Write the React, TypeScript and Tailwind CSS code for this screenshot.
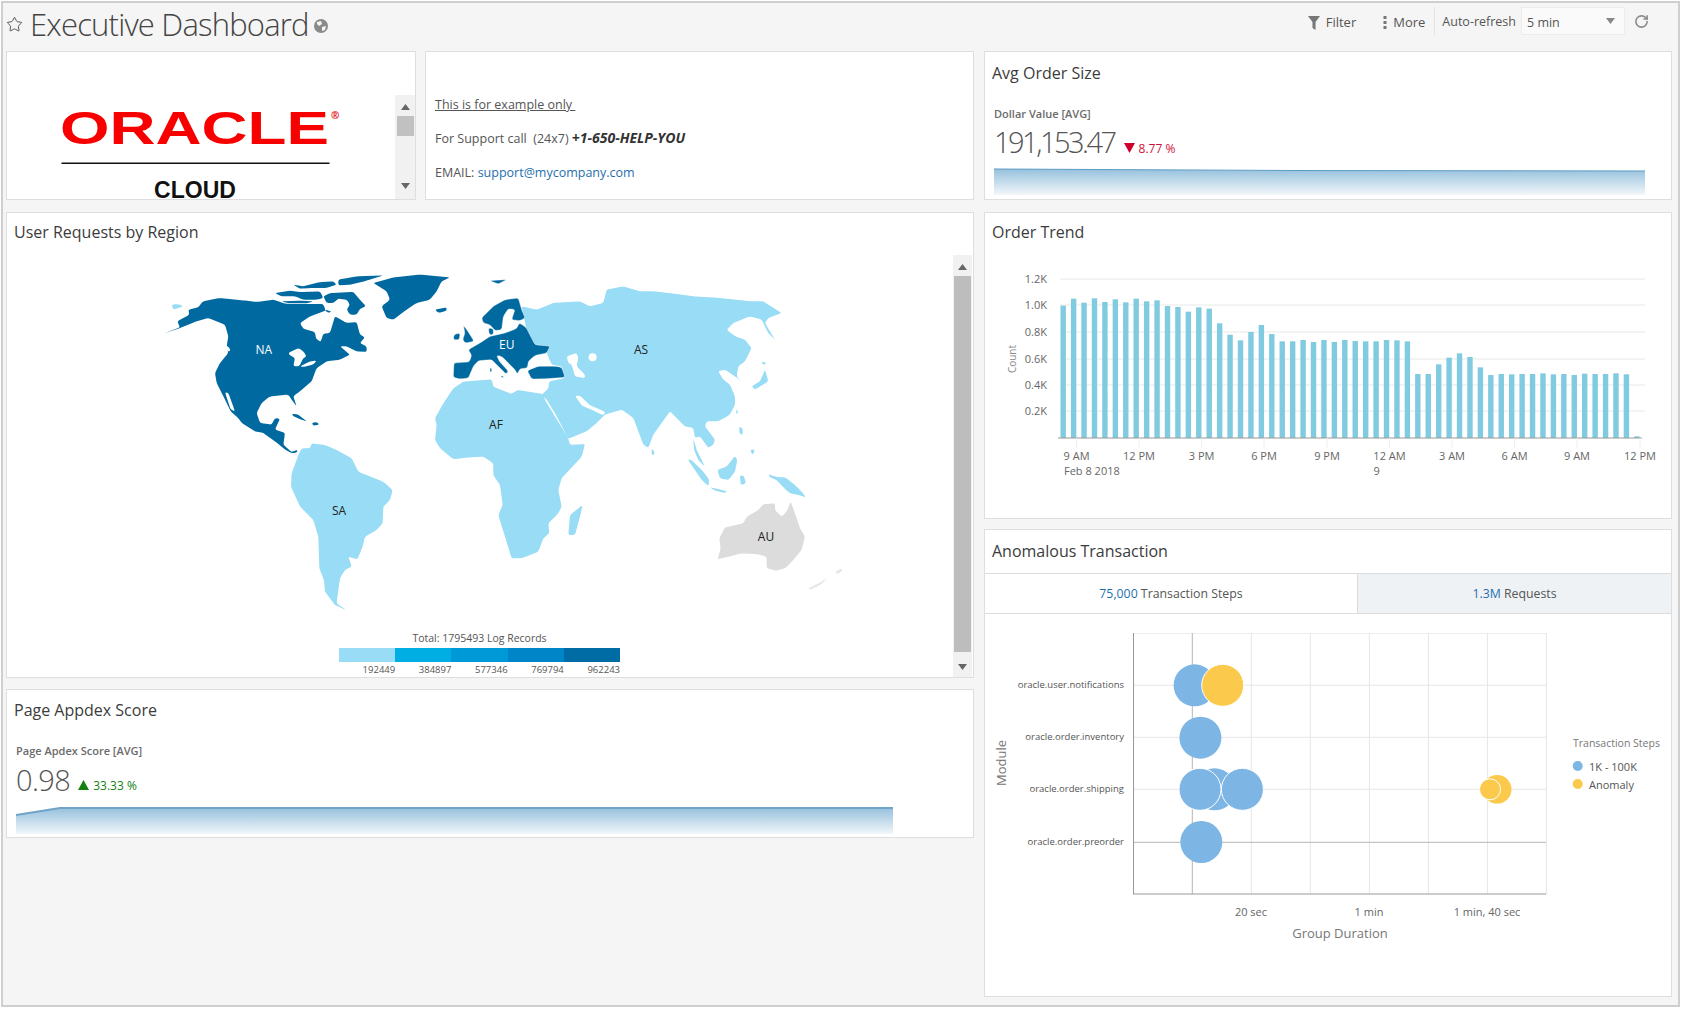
import { RotateCw, Star } from "lucide-react"
import type { ReactNode } from "react"

const NA = {
  main: "8,198 60,178 52,160 88,140 85,125 115,118 128,100 180,90 250,97 290,102 340,95 375,107 440,108 490,108 497,128 450,145 420,165 430,182 465,192 468,212 482,222 490,197 510,195 525,145 560,165 590,162 600,200 615,208 600,225 620,235 620,252 590,250 560,235 540,235 570,260 540,275 500,280 470,300 455,340 420,370 400,385 410,415 395,395 385,380 330,385 305,405 290,435 300,465 335,470 345,450 360,452 345,485 375,495 370,530 395,552 412,545 412,553 395,556 375,545 345,520 310,495 285,490 245,465 235,450 212,430 190,385 170,345 165,315 180,285 205,255 200,235 205,205 195,170 145,150 110,160 60,180",
  islands: [
    "490,85 510,75 580,72 600,95 618,115 600,122 590,140 570,140 560,125 570,110 560,95 535,92 520,105 500,105",
    "345,75 390,68 420,72 480,70 490,90 470,95 430,95 405,85 365,85",
    "400,50 430,55 480,42 520,40 530,50 500,60 450,60 420,62",
    "535,35 590,25 670,22 620,38 570,50 535,52",
    "365,100 420,98 460,100 440,106 380,105",
    "640,45 700,28 780,20 870,28 845,40 830,70 810,95 770,105 740,125 700,155 680,150 665,115 690,95 680,70",
    "825,125 860,118 860,128 835,135",
    "395,437 415,440 440,460 425,455 400,445",
    "455,465 470,462 478,470 460,473",
    "493,125 515,130 505,135",
  ],
  holes: [
    "195,372 205,375 225,430 212,425",
    "385,255 415,240 430,250 440,265 430,270 418,295 400,295 405,270 390,262",
    "420,295 450,280 470,278 460,290 430,297",
    "195,230 210,240 210,252 198,245",
  ],
}

const EU = [
  "125,150 160,115 195,95 235,90 245,125 255,150 240,158 215,155 225,125 205,122 190,145 185,185 165,188 150,170 130,165",
  "85,245 120,225 150,205 195,195 230,182 238,165 258,178 285,230 330,235 320,255 285,262 265,280 262,300 240,302 232,318 225,305 205,285 185,265 170,262 178,280 205,310 198,318 170,290 155,275 115,278 100,295 85,330 60,333 40,328 42,285 88,282 95,262",
  "70,172 80,185 90,200 102,220 75,225 68,215 75,195",
  "42,200 60,195 58,215 40,215",
  "145,180 160,182 160,200 148,200",
  "262,308 295,295 345,295 365,298 375,328 320,332 275,333",
  "150,38 200,35 175,48",
  "150,300 155,300 155,312 150,312",
  "180,323 192,325 188,330",
]

const ASIA =
  "245,115 290,125 340,105 420,100 450,115 490,105 500,65 550,55 600,70 640,70 710,78 760,85 840,90 930,100 970,100 1025,135 985,150 975,165 1005,215 985,195 965,155 930,145 880,165 860,185 885,205 915,215 935,240 915,280 895,295 890,325 905,340 885,325 855,305 835,310 850,335 870,350 885,385 885,410 870,440 835,460 800,460 795,475 825,515 820,530 805,540 780,505 765,510 760,480 735,475 690,430 640,500 625,540 610,530 580,450 545,425 495,440 470,465 440,490 385,512 350,445 320,395 305,380 325,362 328,340 375,330 365,295 335,290 320,255 330,235 285,230 258,178"

const ASIA_HOLES = [
  "380,265 410,255 415,270 410,295 435,320 435,330 405,325 395,290 385,285",
  "405,383 420,383 450,412 497,432 490,442 460,428 425,412",
]

const ASIA_ISLANDS = [
  "935,355 960,340 975,305 985,340 945,365",
  "965,280 980,285 970,292",
]

const AFRICA =
  "15,145 40,100 70,55 100,35 185,28 190,50 245,72 262,60 340,72 345,90 415,205 420,225 465,222 455,260 395,325 385,360 395,410 385,430 355,460 358,490 340,505 325,545 275,565 245,565 225,500 205,435 218,405 210,345 190,315 190,280 160,260 120,262 70,268 30,235 15,210 20,165"

const SOUTH_AMERICA =
  "55,45 65,25 90,25 95,10 110,12 135,15 170,30 215,55 235,95 310,125 338,150 330,180 310,200 308,250 290,270 255,290 248,320 232,358 205,350 215,380 195,390 180,415 175,450 170,490 198,510 165,495 135,455 132,420 118,385 115,290 100,240 60,200 33,140 35,100"

const SE_ASIA = [
  "95,145 103,155 103,165 95,165",
  "203,178 215,180 250,215 268,240 265,258 245,240",
  "220,115 230,150 250,190 255,200 235,180 222,150",
  "270,262 300,268 322,275 315,279 285,272",
  "292,210 320,200 345,168 352,180 345,215 325,240 300,235",
  "360,225 372,228 378,250 362,255",
  "358,80 368,85 368,105 358,100",
  "390,150 405,148 398,165",
  "350,25 355,40 348,42",
  "445,222 460,228 475,232 495,232 525,255 545,275 558,292 535,285 510,280 490,262 470,240 450,232",
]

const AUSTRALIA =
  "293,478 302,445 298,415 315,382 370,370 380,350 415,330 430,312 465,310 465,330 485,350 500,335 512,305 525,340 540,385 555,410 545,450 520,480 495,505 470,512 440,505 440,470 410,462 365,460 325,470"

const BAR_TOPS = [
  302, 281, 293, 280, 291, 283, 292, 281, 289, 286, 303, 306, 320, 307, 311, 355, 389, 406, 381, 360, 387, 409, 409, 405, 411, 405, 411, 405, 408, 409, 409, 405, 406, 409,
  507, 507, 478, 458, 445, 456, 487, 510, 507, 508, 507, 507, 505, 508, 507, 510, 506, 507, 507, 505, 508, 694,
]

const Y_TICKS = [
  { label: "1.2K", y: 279 },
  { label: "1.0K", y: 305 },
  { label: "0.8K", y: 332 },
  { label: "0.6K", y: 359 },
  { label: "0.4K", y: 385 },
  { label: "0.2K", y: 411 },
]

const X_TICKS = [
  { label: "9 AM", x: 1076.6 },
  { label: "12 PM", x: 1139 },
  { label: "3 PM", x: 1201.7 },
  { label: "6 PM", x: 1264 },
  { label: "9 PM", x: 1327 },
  { label: "12 AM", x: 1389.5 },
  { label: "3 AM", x: 1452 },
  { label: "6 AM", x: 1514.6 },
  { label: "9 AM", x: 1577 },
  { label: "12 PM", x: 1640 },
]

const MODULES = [
  { label: "oracle.user.notifications", y: 685.3 },
  { label: "oracle.order.inventory", y: 737.3 },
  { label: "oracle.order.shipping", y: 789.3 },
  { label: "oracle.order.preorder", y: 842.3 },
]

const LEGEND = [
  { value: "192449", color: "bg-[#98dcf5]" },
  { value: "384897", color: "bg-[#00aee3]" },
  { value: "577346", color: "bg-[#0099d8]" },
  { value: "769794", color: "bg-[#0085c8]" },
  { value: "962243", color: "bg-[#006ca5]" },
]

// rounds off the corners of a traced outline so the coast doesn't look cut with scissors
function rounded(points: string, r = 6) {
  const pts = points.split(" ").map((p) => p.split(",").map(Number))
  const toward = (a: number[], b: number[]) => {
    const dist = Math.hypot(b[0] - a[0], b[1] - a[1])
    const d = Math.min(r, dist / 2) / dist
    return `${a[0] + (b[0] - a[0]) * d} ${a[1] + (b[1] - a[1]) * d}`
  }
  return (
    pts
      .map((cur, i) => {
        const prev = pts[(i + pts.length - 1) % pts.length]
        const next = pts[(i + 1) % pts.length]
        return `${i === 0 ? "M" : "L"}${toward(cur, prev)} Q${cur[0]} ${cur[1]} ${toward(cur, next)}`
      })
      .join(" ") + " Z"
  )
}

function Shape({ points, className }: { points: string; className?: string }) {
  return <path d={rounded(points)} className={className} />
}

function Card({ className, children }: { className: string; children: ReactNode }) {
  return <div className={`border border-[#dedede] bg-white ${className}`}>{children}</div>
}

function Title({ className = "pt-[9px]", children }: { className?: string; children: ReactNode }) {
  return <h2 className={`px-[7px] text-[16px] leading-[24px] text-[#3c3c3c] ${className}`}>{children}</h2>
}

function Arrow({ up }: { up?: boolean }) {
  return (
    <svg width="9" height="6" viewBox="0 0 9 6" className="mx-auto fill-[#666]">
      <polygon points={up ? "4.5,0 9,6 0,6" : "0,0 9,0 4.5,6"} />
    </svg>
  )
}

function Spark({ id, width, area, line, lineClass }: { id: string; width: number; area: string; line: string; lineClass: string }) {
  return (
    <svg width={width} height="27" viewBox={`0 0 ${width} 27`} className="ml-[9px] block">
      <defs>
        <linearGradient id={id} x1="0" y1="0" x2="0" y2="1">
          <stop offset="0" stopColor="#96c1dd" />
          <stop offset="1" stopColor="#f2f7fa" />
        </linearGradient>
      </defs>
      <polygon points={area} fill={`url(#${id})`} />
      <polyline points={line} fill="none" className={lineClass} />
    </svg>
  )
}

function Metric({ label, value, delta, up, children }: { label: string; value: string; delta: string; up?: boolean; children: ReactNode }) {
  return (
    <div>
      <div className={`ml-[9px] text-[11px] font-semibold leading-[14px] text-[#6b6b6b] ${up ? "mt-[21px]" : "mt-[22px]"}`}>{label}</div>
      <div className={`ml-[9px] flex h-[36px] items-center ${up ? "mt-[4px]" : "mt-[3px]"}`}>
        <span className={`text-[29px] font-light text-[#555] ${up ? "tracking-[-0.6px]" : "tracking-[-2.5px]"}`}>{value}</span>
        <svg width="11" height="10" viewBox="0 0 11 10" className={up ? "ml-[8px] mt-[10px] fill-[#15800f]" : "ml-[9px] mt-[12px] fill-[#d0002d]"}>
          <polygon points={up ? "5.5,0 11,10 0,10" : "0,0 11,0 5.5,10"} />
        </svg>
        <span className={`ml-[4px] text-[12px] ${up ? "mt-[11px] text-[#15800f]" : "mt-[13px] text-[#d0103a]"}`}>{delta}</span>
      </div>
      <div className={up ? "mt-[9px]" : "mt-[8px]"}>{children}</div>
    </div>
  )
}

function WorldMap() {
  return (
    <svg width="710" height="360" viewBox="150 265 710 360" className="ml-[143px] mt-[10px] block">
      <g transform="translate(440 268) scale(0.3333)" className="fill-[#98dcf5]">
        <Shape points={ASIA} />
        {ASIA_ISLANDS.map((p) => (
          <Shape key={p} points={p} />
        ))}
        {ASIA_HOLES.map((p) => (
          <Shape key={p} points={p} className="fill-white" />
        ))}
        <circle cx="458" cy="268" r="12" className="fill-white" />
      </g>
      <g transform="translate(430 370) scale(0.3333)" className="fill-[#98dcf5]">
        <Shape points={AFRICA} />
        <Shape points="458,405 450,440 435,495 415,495 420,435" />
      </g>
      <g transform="translate(280 440) scale(0.3333)" className="fill-[#98dcf5]">
        <Shape points={SOUTH_AMERICA} />
      </g>
      <g transform="translate(620 400) scale(0.3333)">
        {SE_ASIA.map((p) => (
          <Shape key={p} points={p} className="fill-[#98dcf5]" />
        ))}
        <Shape points={AUSTRALIA} className="fill-[#dcdcdc]" />
        <Shape points="565,565 600,548 622,532 605,552 570,570" className="fill-[#e6e6e6]" />
        <Shape points="645,515 668,505 665,515 650,522" className="fill-[#e6e6e6]" />
      </g>
      <g transform="translate(160 268) scale(0.3333)" className="fill-[#00699f]">
        <Shape points={NA.main} />
        {NA.islands.map((p) => (
          <Shape key={p} points={p} />
        ))}
        {NA.holes.map((p) => (
          <Shape key={p} points={p} className="fill-white" />
        ))}
        <Shape points="35,110 55,108 70,115 40,125" className="fill-[#98dcf5]" />
      </g>
      <g transform="translate(440 268) scale(0.3333)" className="fill-[#00699f] stroke-white stroke-[1px]">
        {EU.map((p) => (
          <Shape key={p} points={p} />
        ))}
      </g>
      <g textAnchor="middle" className="text-[12px]">
        <text x="263.7" y="354" className="fill-white">NA</text>
        <text x="506.7" y="349" className="fill-white">EU</text>
        <text x="641" y="354" className="fill-[#222]">AS</text>
        <text x="496" y="429" className="fill-[#222]">AF</text>
        <text x="339" y="515" className="fill-[#222]">SA</text>
        <text x="766" y="541" className="fill-[#222]">AU</text>
      </g>
    </svg>
  )
}

function OrderTrend() {
  return (
    <svg width="686" height="268" viewBox="985 250 686 268" className="block">
      {Y_TICKS.map((t) => (
        <g key={t.label}>
          <line x1="1060" x2="1645" y1={t.y} y2={t.y} className="stroke-[#e8e8e8]" />
          <text x="1047" y={t.y + 3.5} textAnchor="end" className="fill-[#666] text-[11px]">{t.label}</text>
        </g>
      ))}
      {BAR_TOPS.map((top, i) => (
        <rect key={i} x={1060.5 + i * 10.43} y={205 + top / 3} width="5.4" height={(699 - top) / 3} className="fill-[#80cbdf]" />
      ))}
      <line x1="1058" x2="1642" y1="438" y2="438" className="stroke-[#999]" />
      {X_TICKS.map((t) => (
        <g key={t.x}>
          <line x1={t.x} x2={t.x} y1="438" y2="448" className="stroke-[#eeeeee]" />
          <text x={t.x} y="460" textAnchor="middle" className="fill-[#666] text-[11px]">{t.label}</text>
        </g>
      ))}
      <text x="1064" y="475" className="fill-[#666] text-[11px]">Feb 8 2018</text>
      <text x="1373.5" y="475" className="fill-[#666] text-[11px]">9</text>
      <text transform="translate(1016 359) rotate(-90)" textAnchor="middle" className="fill-[#888] text-[10px]">Count</text>
    </svg>
  )
}

function Bubbles() {
  const gridX = [1251.3, 1310.3, 1369.4, 1428.4, 1487.4, 1546.4]
  const blue = "fill-[#7db5e4]"
  const yellow = "fill-[#fbc94b]"
  return (
    <svg width="686" height="382" viewBox="985 614 686 382" className="block">
      <line x1="1133" x2="1546" y1="633.5" y2="633.5" className="stroke-[#eeeeee]" />
      {gridX.map((x) => (
        <line key={x} x1={x} x2={x} y1="633" y2="894" className="stroke-[#e6e6e6]" />
      ))}
      {MODULES.map((m, i) => (
        <g key={m.label}>
          <line x1="1134" x2="1546" y1={m.y} y2={m.y} className={i === 3 ? "stroke-[#b5b5b5]" : "stroke-[#e6e6e6]"} />
          <text x="1124" y={m.y + 3} textAnchor="end" className="fill-[#555] text-[9.5px]">{m.label}</text>
        </g>
      ))}
      <line x1="1192.3" x2="1192.3" y1="633" y2="894" className="stroke-[#b5b5b5]" />
      <line x1="1133.5" x2="1133.5" y1="633" y2="894" className="stroke-[#999]" />
      <line x1="1133" x2="1546" y1="894" y2="894" className="stroke-[#999]" />

      <circle cx="1194.6" cy="685.3" r="21" className={blue} />
      <circle cx="1222.7" cy="685.3" r="21" className={`${yellow} stroke-white`} />
      <circle cx="1200.4" cy="737.7" r="21" className={blue} />
      <circle cx="1214.7" cy="789.3" r="21" className={blue} />
      <circle cx="1200" cy="789.3" r="21" className={`${blue} stroke-white`} />
      <circle cx="1242.4" cy="789.3" r="21" className={`${blue} stroke-white`} />
      <circle cx="1201.3" cy="842" r="21" className={blue} />
      <circle cx="1497.2" cy="789.3" r="14.3" className={yellow} />
      <circle cx="1490" cy="789.3" r="10.5" className={`${yellow} stroke-white`} />

      <text x="1251" y="916" textAnchor="middle" className="fill-[#666] text-[11px]">20 sec</text>
      <text x="1369" y="916" textAnchor="middle" className="fill-[#666] text-[11px]">1 min</text>
      <text x="1487" y="916" textAnchor="middle" className="fill-[#666] text-[11px]">1 min, 40 sec</text>
      <text x="1340" y="938" textAnchor="middle" className="fill-[#777] text-[13px]">Group Duration</text>
      <text transform="translate(1006 763) rotate(-90)" textAnchor="middle" className="fill-[#777] text-[13px]">Module</text>

      <text x="1573" y="747" className="fill-[#777] text-[10.5px]">Transaction Steps</text>
      <circle cx="1577.7" cy="766" r="5" className={blue} />
      <text x="1589" y="770.5" className="fill-[#555] text-[11px]">1K - 100K</text>
      <circle cx="1577.7" cy="784" r="5" className={yellow} />
      <text x="1589" y="789" className="fill-[#555] text-[11px]">Anomaly</text>
    </svg>
  )
}

export default function App() {
  return (
    <div className="h-[1009px] w-[1681px] overflow-hidden bg-white pb-[2px] pl-[1px] pr-[1px] pt-[1px] font-['Open_Sans',sans-serif]">
      <div className="flex h-full flex-col border-2 border-[#cfcfcf] bg-[#f5f5f5]">
        {/* toolbar */}
        <header className="flex h-[48px] shrink-0 items-start pl-[3px] pr-[29px]">
          <div className="flex h-[42px] items-center">
            <Star size={17} strokeWidth={1.25} className="text-[#444]" />
            <h1 className="ml-[7px] text-[31px] font-light tracking-[-0.8px] text-[#444]">Executive Dashboard</h1>
            <svg width="14" height="14" viewBox="0 0 14 14" className="ml-[5px] mt-[4px]">
              <circle cx="7" cy="7" r="7" fill="#8a8a8a" />
              <path d="M3 3 L7 2 L8 5 L5 7 L3 5 Z M8 8 L12 7 L11 11 L8 12 Z" fill="#f5f5f5" />
            </svg>
          </div>
          <div className="ml-auto mt-[4px] flex items-center text-[13px] text-[#555]">
            <svg width="12" height="14" viewBox="0 0 12 14" className="mt-[4px] fill-[#777]">
              <polygon points="0,0 12,0 7.5,6 7.5,14 4.5,12 4.5,6" />
            </svg>
            <span className="ml-[6px] mt-[4px]">Filter</span>
            <svg width="4" height="13" viewBox="0 0 4 13" className="ml-[27px] mt-[3px] fill-[#777]">
              <rect x="0.5" width="3" height="3" />
              <rect x="0.5" y="5" width="3" height="3" />
              <rect x="0.5" y="10" width="3" height="3" />
            </svg>
            <span className="ml-[6px] mt-[4px]">More</span>
            <div className="ml-[9px] h-[28px] w-px bg-[#e2e2e2]" />
            <span className="ml-[7px] mt-[3px] text-[12.5px]">Auto-refresh</span>
            <div className="ml-[5px] flex h-[28px] w-[104px] items-center justify-between border border-[#ececec] bg-[#fafafa] pl-[5px] pr-[9px] text-[12.5px]">
              <span className="mt-[5px]">5 min</span>
              <svg width="9" height="6" viewBox="0 0 9 6" className="fill-[#888]">
                <polygon points="0,0 9,0 4.5,6" />
              </svg>
            </div>
            <RotateCw size={15} strokeWidth={2.5} className="ml-[9px] text-[#8a8a8a]" />
          </div>
        </header>

        <div className="flex gap-[10px] pl-[3px]">
          {/* left column */}
          <div className="flex w-[968px] flex-col gap-[12px]">
            <div className="flex gap-[9px]">
              <Card className="flex h-[149px] w-[410px] justify-between overflow-hidden">
                <svg width="290" height="99" viewBox="56 100 290 99" className="ml-[49px] mt-[48px] block shrink-0">
                  <text x="60" y="144" textLength="269" lengthAdjust="spacingAndGlyphs" className="fill-[#f80000] text-[47px] font-bold [font-family:'Liberation_Sans',sans-serif]">ORACLE</text>
                  <text x="331" y="119" className="fill-[#e00000] text-[10px] font-bold">®</text>
                  <rect x="61.5" y="162.5" width="268" height="1.5" className="fill-[#111]" />
                  <text x="195" y="197.5" textAnchor="middle" className="fill-[#111] text-[23px] font-bold [font-family:'Liberation_Sans',sans-serif]">CLOUD</text>
                </svg>
                <div className="mt-[43px] w-[20px] bg-[#f1f1f1] pt-[9px]">
                  <Arrow up />
                  <div className="mx-auto mt-[6px] h-[20px] w-[17px] bg-[#c1c1c1]" />
                  <div className="mt-[47px]">
                    <Arrow />
                  </div>
                </div>
              </Card>
              <Card className="h-[149px] flex-1 pl-[9px] pt-[43px] text-[12.5px] leading-[20px] text-[#555]">
                <p className="underline">This is for example only&nbsp;</p>
                <p className="mt-[13px] whitespace-pre">
                  For Support call&nbsp; (24x7) <b className="text-[14px] font-bold italic text-[#333]">+1-650-HELP-YOU</b>
                </p>
                <p className="mt-[14px]">
                  EMAIL: <span className="text-[#1f6fae]">support@mycompany.com</span>
                </p>
              </Card>
            </div>

            <Card className="h-[466px]">
              <div className="h-[42px]">
                <Title className="pt-[7px]">User Requests by Region</Title>
              </div>
              <div className="flex h-[422px] justify-between">
                <div>
                  <WorldMap />
                  <div className="ml-[332px] mt-[6px] w-[281px]">
                    <div className="text-center text-[10.5px] leading-[14px] text-[#555]">Total: 1795493 Log Records</div>
                    <div className="mt-[3px] grid grid-cols-5">
                      {LEGEND.map((l) => (
                        <div key={l.value}>
                          <div className={`h-[14px] ${l.color}`} />
                          <div className="mt-[1px] text-right text-[9.5px] leading-[14px] text-[#555]">{l.value}</div>
                        </div>
                      ))}
                    </div>
                  </div>
                </div>
                <div className="mr-px w-[19px] bg-[#f1f1f1] pt-[9px]">
                  <Arrow up />
                  <div className="mx-auto mt-[6px] h-[376px] w-[17px] bg-[#bdbdbd]" />
                  <div className="mt-[12px]">
                    <Arrow />
                  </div>
                </div>
              </div>
            </Card>

            <Card className="-mt-px h-[149px]">
              <Title className="pb-px pt-[8px]">Page Appdex Score</Title>
              <Metric label="Page Apdex Score [AVG]" value="0.98" delta="33.33 %" up>
                <Spark
                  id="appdex-fill"
                  width={877}
                  area="0,8 44,1 877,1 877,27 0,27"
                  line="0,8 44,1 877,1"
                  lineClass="stroke-[#6fa3c7] stroke-2"
                />
              </Metric>
            </Card>
          </div>

          {/* right column */}
          <div className="flex w-[688px] flex-col gap-[12px]">
            <Card className="h-[149px]">
              <Title>Avg Order Size</Title>
              <Metric label="Dollar Value [AVG]" value="191,153.47" delta="8.77 %">
                <Spark
                  id="order-fill"
                  width={651}
                  area="0,1 300,2.5 651,3 651,27 0,27"
                  line="0,1 300,2.5 651,3"
                  lineClass="stroke-[#5d9cc4]"
                />
              </Metric>
            </Card>

            <Card className="h-[307px]">
              <div className="h-[37px]">
                <Title className="pt-[7px]">Order Trend</Title>
              </div>
              <OrderTrend />
            </Card>

            <Card className="-mt-[2px] h-[468px]">
              <div className="h-[43px]">
                <Title>Anomalous Transaction</Title>
              </div>
              <div className="flex h-[41px] text-[12.3px] text-[#555]">
                <div className="flex w-[373px] items-center justify-center border-y border-r border-[#dcdcdc] bg-white pt-[2px]">
                  <span>
                    <span className="text-[#1f6fae]">75,000</span> Transaction Steps
                  </span>
                </div>
                <div className="flex flex-1 items-center justify-center border-y border-[#dcdcdc] bg-[#eef2f5] pt-[2px]">
                  <span>
                    <span className="text-[#1f6fae]">1.3M</span> Requests
                  </span>
                </div>
              </div>
              <Bubbles />
            </Card>
          </div>
        </div>
      </div>
    </div>
  )
}
